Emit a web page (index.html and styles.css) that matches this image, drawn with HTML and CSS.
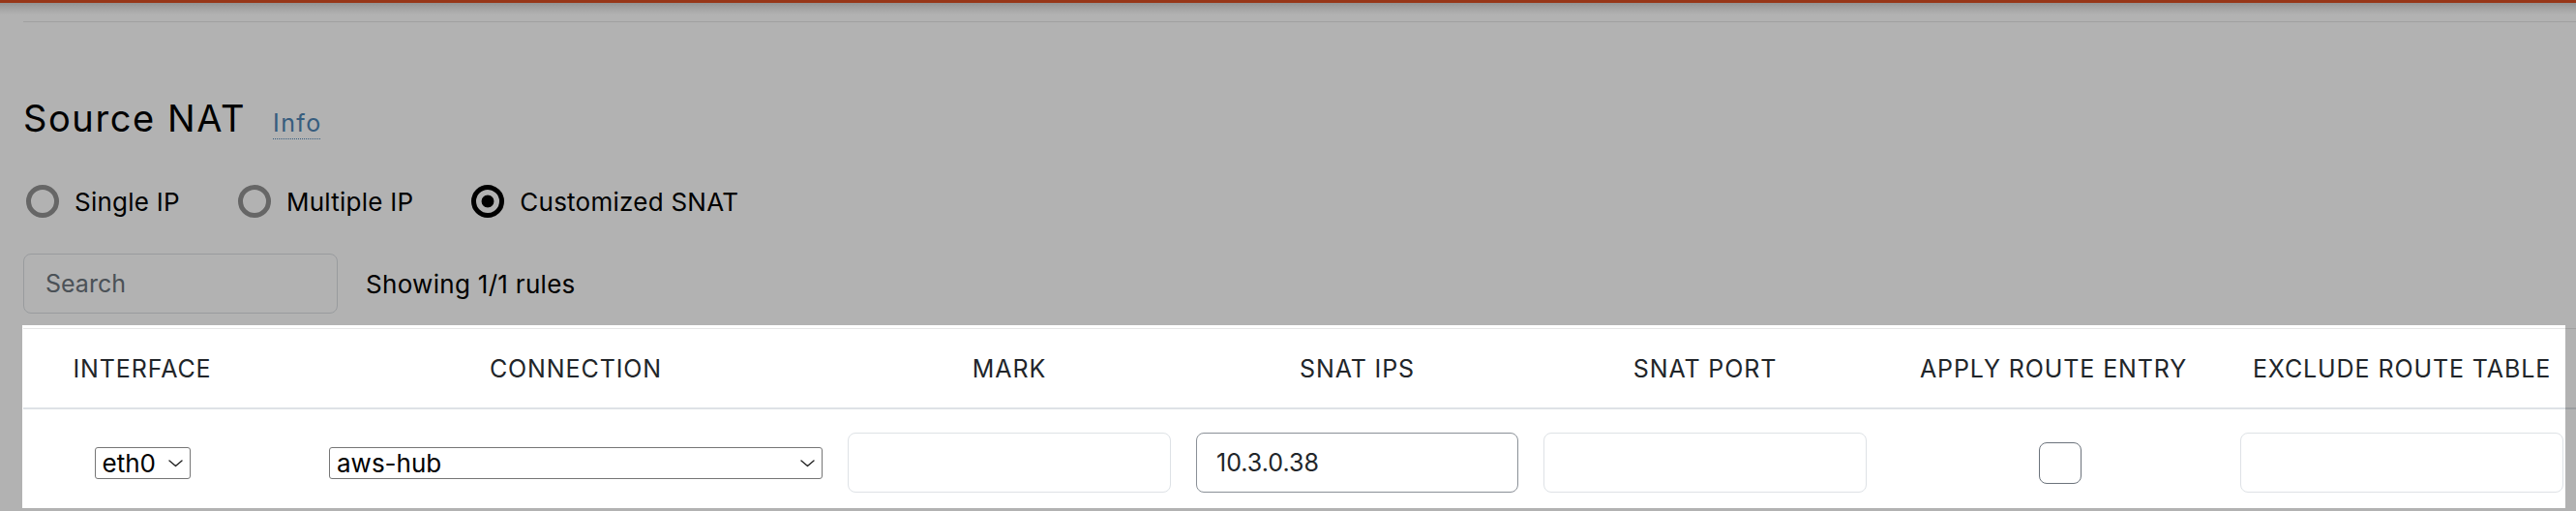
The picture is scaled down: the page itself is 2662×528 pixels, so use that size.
FILE: index.html
```html
<!DOCTYPE html>
<html lang="en">
<head>
<meta charset="utf-8">
<title>Source NAT</title>
<link rel="stylesheet" href="styles.css">
</head>
<body>
<div class="topbar"></div>
<div class="topshade"></div>
<main class="page">
  <div class="divider"></div>
  <div class="title-row">
    <h2 class="title">Source NAT</h2>
    <a class="info" href="#">Info</a>
  </div>
  <div class="radios">
    <label class="radio"><input type="radio" name="snat"><span>Single IP</span></label>
    <label class="radio"><input type="radio" name="snat"><span>Multiple IP</span></label>
    <label class="radio"><input type="radio" name="snat" checked><span>Customized SNAT</span></label>
  </div>
  <div class="search-row">
    <input class="search" type="text" placeholder="Search">
    <span class="count">Showing 1/1 rules</span>
  </div>
  <div class="table-wrap">
    <table class="rules">
      <colgroup>
        <col class="c-iface">
        <col class="c-conn">
        <col class="c-std">
        <col class="c-ips">
        <col class="c-std">
        <col class="c-std">
        <col class="c-std">
      </colgroup>
      <thead>
        <tr>
          <th class="first">INTERFACE</th>
          <th>CONNECTION</th>
          <th>MARK</th>
          <th>SNAT IPS</th>
          <th>SNAT PORT</th>
          <th>APPLY ROUTE ENTRY</th>
          <th>EXCLUDE ROUTE TABLE</th>
        </tr>
      </thead>
      <tbody>
        <tr>
          <td class="first">
            <span class="select-wrap">
              <select class="sel sel-iface"><option>eth0</option></select>
              <svg class="chev" width="15" height="8" viewBox="0 0 15 8" aria-hidden="true"><polyline points="1,1 7.5,6.5 14,1" fill="none" stroke="#222" stroke-width="1.4" stroke-linecap="round" stroke-linejoin="round"/></svg>
            </span>
          </td>
          <td>
            <span class="select-wrap">
              <select class="sel sel-conn"><option>aws-hub</option></select>
              <svg class="chev" width="15" height="8" viewBox="0 0 15 8" aria-hidden="true"><polyline points="1,1 7.5,6.5 14,1" fill="none" stroke="#222" stroke-width="1.4" stroke-linecap="round" stroke-linejoin="round"/></svg>
            </span>
          </td>
          <td><input class="field" type="text"></td>
          <td><input class="field field-active" type="text" value="10.3.0.38"></td>
          <td><input class="field" type="text"></td>
          <td><input class="check" type="checkbox"></td>
          <td><input class="field" type="text"></td>
        </tr>
      </tbody>
    </table>
    <div class="spotlight"></div>
  </div>
</main>
</body>
</html>
```

FILE: styles.css
```css
html, body {
  margin: 0;
  padding: 0;
  overflow: hidden;
  background: #ffffff;
}

body {
  font-family: Inter, "Noto Sans", "Liberation Sans", sans-serif;
  color: #212529;
  width: 2662px;
  height: 528px;
}

.topbar {
  height: 3px;
  background: #d84f25;
}

.topshade {
  height: 19px;
  background: linear-gradient(to bottom, #d4d4d4 0px, #f2f2f2 8px, #ffffff 12px);
}

.page {
  padding-left: 24px;
}

.divider {
  height: 1px;
  background: #e6e6e6;
}

.title-row {
  display: flex;
  align-items: baseline;
  gap: 28px;
  margin-top: 76px;
}

.title {
  margin: 0;
  font-size: 38px;
  font-weight: 400;
  line-height: 46px;
  letter-spacing: 1.6px;
  color: #000;
}

.info {
  font-size: 25px;
  letter-spacing: 1.4px;
  color: #4f86b5;
  text-decoration-line: underline;
  text-decoration-style: dotted;
  text-decoration-thickness: 1px;
  text-underline-offset: 7px;
}

.radios {
  display: flex;
  align-items: center;
  gap: 60px;
  margin-top: 46px;
  padding-left: 3px;
}

.radio {
  display: flex;
  align-items: center;
  gap: 16px;
  font-size: 26px;
  color: #000;
  letter-spacing: 0.25px;
}

.radio input {
  appearance: none;
  -webkit-appearance: none;
  margin: 0;
  width: 34px;
  height: 34px;
  border: 5px solid #929292;
  border-radius: 50%;
  background: #fff;
  box-sizing: border-box;
}

.radio input:checked {
  border-color: #000;
  background: radial-gradient(circle, #000 0, #000 6px, #fff 6.8px);
}

.search-row {
  display: flex;
  align-items: center;
  gap: 29px;
  margin-top: 37px;
}

.search {
  box-sizing: border-box;
  width: 325px;
  height: 62px;
  border: 1px solid #dcdfe3;
  border-radius: 8px;
  padding: 0 22px;
  font-family: inherit;
  font-size: 25px;
  color: #212529;
  background: #fff;
  outline: none;
}

.search::placeholder {
  color: #6c757d;
}

.count {
  font-size: 26px;
  color: #000;
  letter-spacing: 0.3px;
}

.table-wrap {
  position: relative;
  margin-top: 15px;
}

.rules {
  width: 100%;
  table-layout: fixed;
  border-collapse: collapse;
  border-top: 1px solid #e6e6e6;
}

.c-iface { width: 303px; }
.c-conn { width: 536px; }
.c-std { width: 360px; }
.c-ips { width: 359px; }

.rules th {
  height: 81px;
  padding: 0 13px;
  font-size: 25px;
  font-weight: 400;
  letter-spacing: 0.9px;
  color: #212529;
  text-align: center;
  vertical-align: middle;
  border-bottom: 2px solid #dee2e6;
  white-space: nowrap;
}

.rules td {
  padding: 24px 13px;
  text-align: center;
  vertical-align: middle;
}

.rules .first {
  padding-right: 70px;
}

.select-wrap {
  position: relative;
  display: inline-block;
  vertical-align: middle;
}

.sel {
  appearance: none;
  -webkit-appearance: none;
  box-sizing: border-box;
  display: block;
  font-family: inherit;
  font-size: 26px;
  color: #000;
  height: 33px;
  padding: 0 30px 0 7px;
  border: 1px solid #767676;
  border-radius: 3px;
  background: #fff;
  text-align: left;
}

.sel-iface { width: 99px; }
.sel-conn { width: 510px; }

.chev {
  position: absolute;
  right: 8px;
  top: 13px;
  pointer-events: none;
}

.field {
  box-sizing: border-box;
  display: block;
  width: 100%;
  height: 62px;
  border: 1px solid #dee2e6;
  border-radius: 8px;
  padding: 0 20px;
  font-family: inherit;
  font-size: 25px;
  color: #212529;
  background: #fff;
  outline: none;
}

.field-active {
  border-color: #8a9097;
}

.check {
  appearance: none;
  -webkit-appearance: none;
  box-sizing: border-box;
  margin: 0 0 0 14px;
  width: 44px;
  height: 43px;
  border: 1.5px solid #6c737c;
  border-radius: 8px;
  background: #fff;
  vertical-align: middle;
}

.spotlight {
  position: absolute;
  top: -3px;
  left: -1px;
  right: 11px;
  height: 189px;
  pointer-events: none;
  box-shadow: 0 0 0 4000px rgba(0, 0, 0, 0.3);
}
```
